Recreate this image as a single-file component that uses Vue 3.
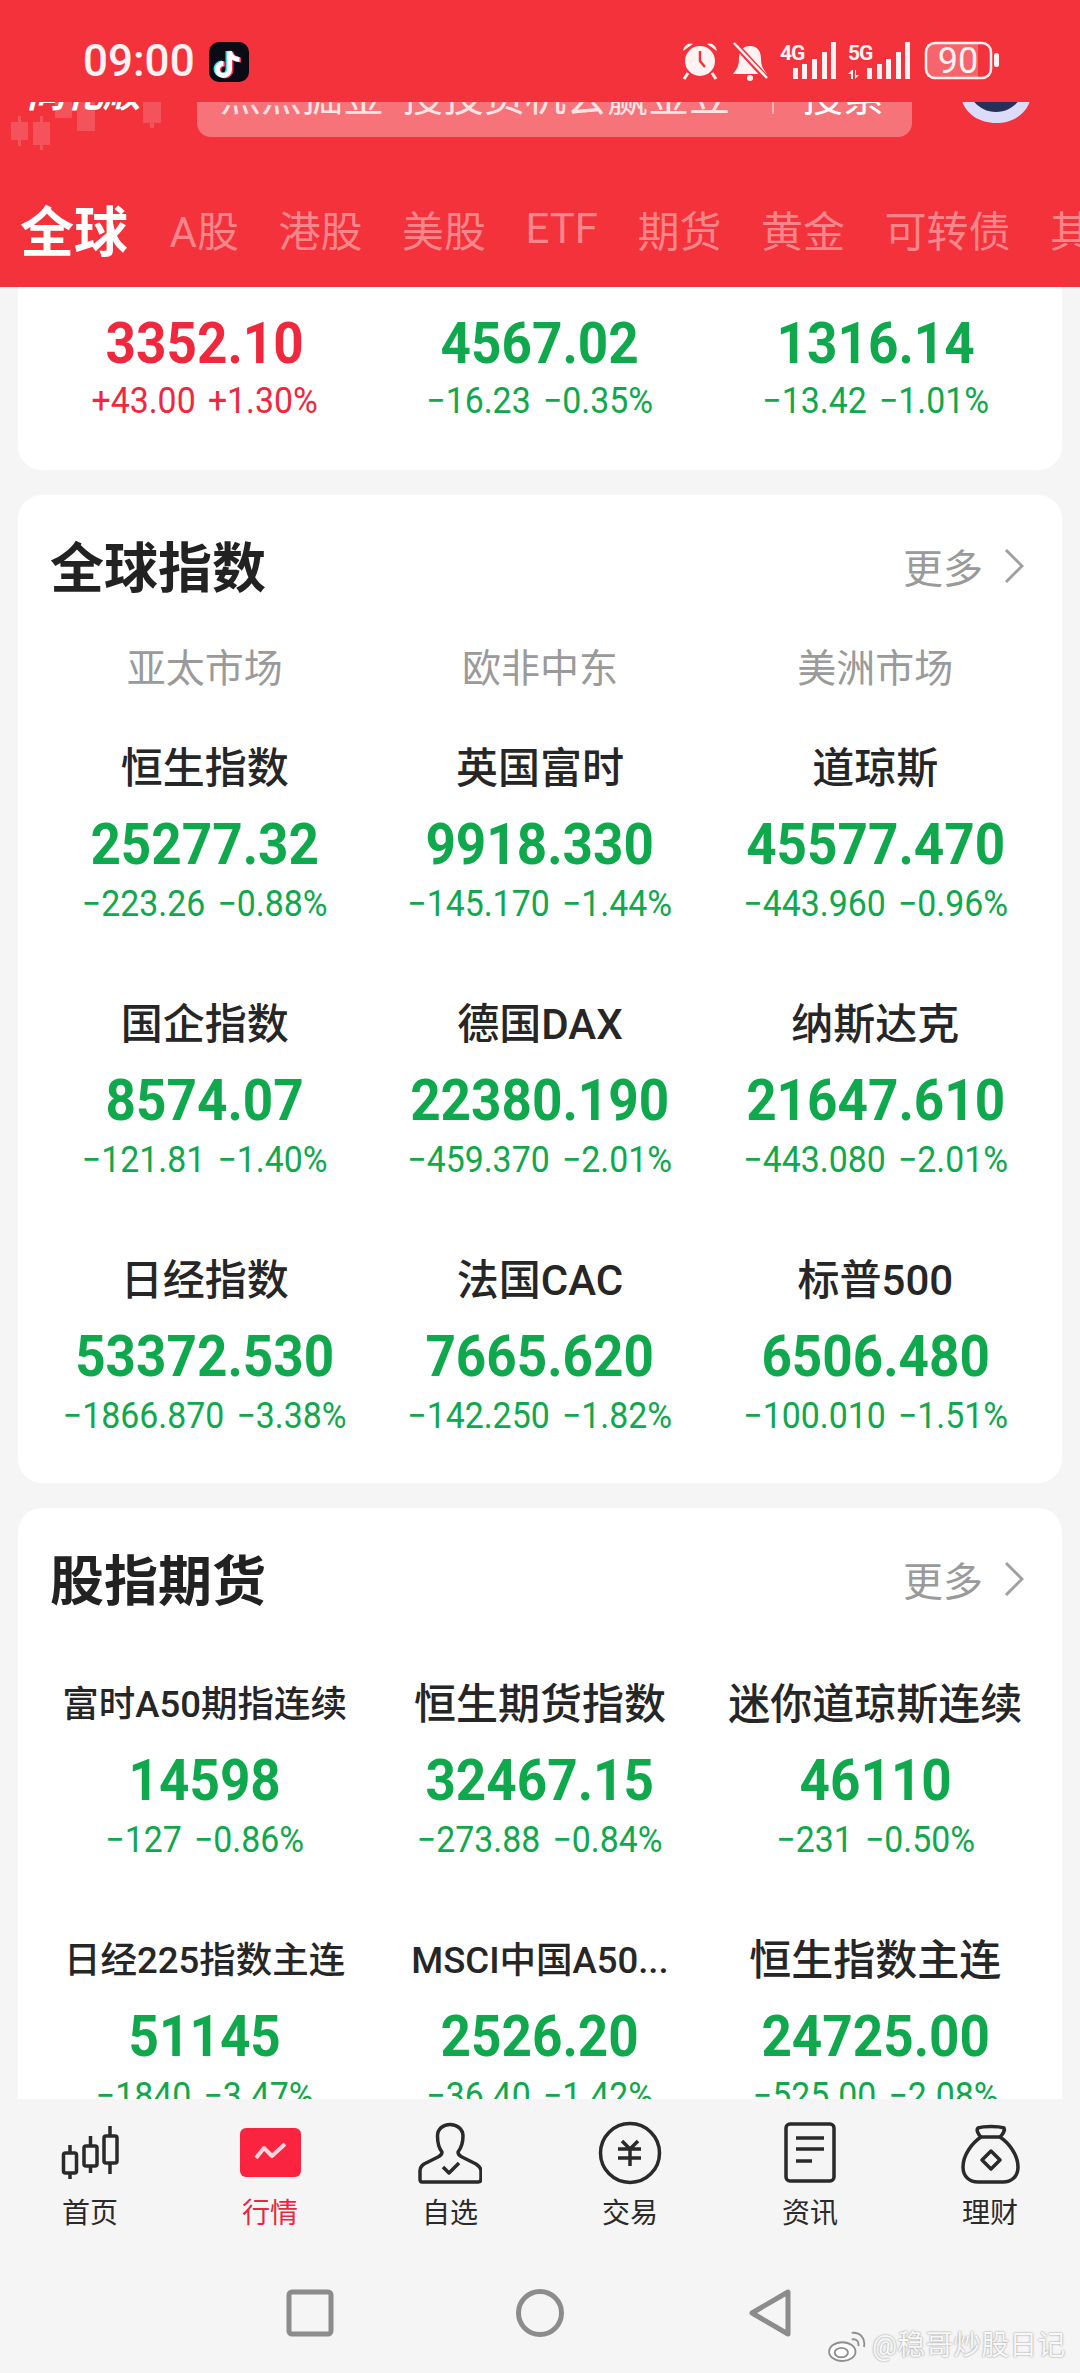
<script setup>
const tabs = ["A股", "港股", "美股", "ETF", "期货", "黄金", "可转债", "其他"];

const topQuotes = [
  { value: "3352.10", diff: "+43.00", pct: "+1.30%", up: true },
  { value: "4567.02", diff: "−16.23", pct: "−0.35%" },
  { value: "1316.14", diff: "−13.42", pct: "−1.01%" },
];

const globalQuotes = [
  { name: "恒生指数", value: "25277.32", diff: "−223.26", pct: "−0.88%" },
  { name: "英国富时", value: "9918.330", diff: "−145.170", pct: "−1.44%" },
  { name: "道琼斯", value: "45577.470", diff: "−443.960", pct: "−0.96%" },
  { name: "国企指数", value: "8574.07", diff: "−121.81", pct: "−1.40%" },
  { name: "德国DAX", value: "22380.190", diff: "−459.370", pct: "−2.01%" },
  { name: "纳斯达克", value: "21647.610", diff: "−443.080", pct: "−2.01%" },
  { name: "日经指数", value: "53372.530", diff: "−1866.870", pct: "−3.38%" },
  { name: "法国CAC", value: "7665.620", diff: "−142.250", pct: "−1.82%" },
  { name: "标普500", value: "6506.480", diff: "−100.010", pct: "−1.51%" },
];

const futures = [
  { name: "富时A50期指连续", value: "14598", diff: "−127", pct: "−0.86%", small: true },
  { name: "恒生期货指数", value: "32467.15", diff: "−273.88", pct: "−0.84%" },
  { name: "迷你道琼斯连续", value: "46110", diff: "−231", pct: "−0.50%" },
  { name: "日经225指数主连", value: "51145", diff: "−1840", pct: "−3.47%", small: true },
  { name: "MSCI中国A50...", value: "2526.20", diff: "−36.40", pct: "−1.42%", small: true },
  { name: "恒生指数主连", value: "24725.00", diff: "−525.00", pct: "−2.08%" },
];
</script>

<template>
  <div class="page">
    <header class="header">
      <div class="status-bar">
        <span class="time">09:00</span>
        <svg class="tiktok" viewBox="0 0 40 40">
          <rect width="40" height="40" rx="10" fill="#0b0b16" />
          <g fill="none" stroke-width="5">
            <path d="M19 9V27A6 6 0 1 1 13 21M19 9C20 14 24 17 29 17" stroke="#35e0e6" />
            <path d="M22 10V28A6 6 0 1 1 16 22M22 10C23 15 27 18 32 18" stroke="#f5305a" />
            <path d="M20.5 9.5V27.5A6 6 0 1 1 14.5 21.5M20.5 9.5C21.5 14.5 25.5 17.5 30.5 17.5" stroke="#fff" />
          </g>
        </svg>
        <svg class="status-icons" viewBox="0 0 320 44">
          <!-- alarm -->
          <circle cx="20" cy="21" r="15" fill="#fff2f2" />
          <path d="M20 11V21L25 27" fill="none" stroke="#f3323b" stroke-width="2.5" />
          <path d="M3 11C4 5 9 2 13 4ZM37 11C36 5 31 2 27 4Z" fill="#fff2f2" />
          <path d="M8 33L4 39M32 33L36 39" stroke="#fff2f2" stroke-width="3" />
          <!-- muted bell -->
          <path d="M70 6C62 6 59 12 59 19C59 27 56 30 53 34H87C84 30 81 27 81 19C81 12 78 6 70 6Z" fill="#fff2f2" />
          <circle cx="70" cy="38" r="3" fill="#fff2f2" />
          <path d="M54 3L87 39" stroke="#f3323b" stroke-width="6" />
          <path d="M54 3L87 38" stroke="#fff2f2" stroke-width="2.5" />
          <!-- 4G -->
          <text x="100" y="20" class="net">4G</text>
          <path d="M113 28h5v11h-5zM122 24h5v15h-5zM132 19h5v20h-5zM142 12h5v27h-5zM151 2h5v37h-5z" fill="#fff2f2" />
          <!-- 5G -->
          <text x="168" y="20" class="net">5G</text>
          <path d="M172 30l-4 4h3v5h2v-9zM175 30v9l4-4h-3v-5z" fill="#fff2f2" />
          <path d="M187 28h5v11h-5zM197 24h5v15h-5zM206 19h5v20h-5zM216 12h5v27h-5zM225 2h5v37h-5z" fill="#fff2f2" />
          <!-- battery -->
          <rect x="247" y="4" width="51" height="33" fill="#fff" opacity=".25" />
          <rect x="246" y="3" width="65" height="35" rx="9" fill="none" stroke="#fff2f2" stroke-width="2.5" />
          <rect x="314" y="13" width="5" height="14" rx="2.5" fill="#fff2f2" />
          <text x="278" y="33" class="batt">90</text>
        </svg>
      </div>

      <div class="search-row">
        <svg class="deco" viewBox="0 0 170 60">
          <g fill="#fff" opacity=".16">
            <path d="M11 20h17v18H11zM18 14h3v30h-3z" />
            <path d="M33 20h17v23H33zM40 14h3v34h-3z" />
            <path d="M55 0h17v16H55zM77 0h18v29H77z" />
            <path d="M143 0h18v21h-18zM150 0h4v26h-4z" />
          </g>
        </svg>
        <div class="logo">同花顺</div>
        <div class="search">
          <span class="hint">点点掘金<i class="gap"></i>搜投资机会赢金豆</span>
          <span class="divider"></span>
          <span class="search-btn">搜索</span>
        </div>
        <svg class="robot" viewBox="0 0 72 40">
          <path d="M1 8C1 25 16 38 36 38C56 38 71 25 71 8V0H1Z" fill="#dcdcfa" />
          <path d="M8 0C8 14 20 27 36 27C52 27 64 14 64 0Z" fill="#25315a" />
          <circle cx="25" cy="5" r="2" fill="#fff" />
          <circle cx="47" cy="5" r="2" fill="#fff" />
        </svg>
      </div>

      <nav class="tabs">
        <span class="tab active">全球</span>
        <span v-for="t in tabs" :key="t" class="tab">{{ t }}</span>
      </nav>
    </header>

    <main class="content">
      <section class="card first">
        <div class="grid">
          <div v-for="q in topQuotes" :key="q.value" class="quote" :class="{ up: q.up }">
            <div class="value">{{ q.value }}</div>
            <div class="change"><span>{{ q.diff }}</span><span>{{ q.pct }}</span></div>
          </div>
        </div>
      </section>

      <section class="card">
        <div class="card-head">
          <h2>全球指数</h2>
          <div class="more">
            更多
            <svg viewBox="0 0 20 36" class="chevron"><path d="M2 2L18 18L2 34" /></svg>
          </div>
        </div>
        <div class="grid markets">
          <span>亚太市场</span>
          <span>欧非中东</span>
          <span>美洲市场</span>
        </div>
        <div class="grid rows">
          <div v-for="q in globalQuotes" :key="q.name" class="quote">
            <div class="name">{{ q.name }}</div>
            <div class="value">{{ q.value }}</div>
            <div class="change"><span>{{ q.diff }}</span><span>{{ q.pct }}</span></div>
          </div>
        </div>
      </section>

      <section class="card">
        <div class="card-head">
          <h2>股指期货</h2>
          <div class="more">
            更多
            <svg viewBox="0 0 20 36" class="chevron"><path d="M2 2L18 18L2 34" /></svg>
          </div>
        </div>
        <div class="grid rows futures">
          <div v-for="q in futures" :key="q.name" class="quote">
            <div class="name" :class="{ small: q.small }">{{ q.name }}</div>
            <div class="value">{{ q.value }}</div>
            <div class="change"><span>{{ q.diff }}</span><span>{{ q.pct }}</span></div>
          </div>
        </div>
      </section>
    </main>

    <footer class="bottom">
      <div class="nav">
        <div class="nav-item">
          <svg viewBox="0 0 64 64" class="ico">
            <path d="M12 24V58M32.5 15V52M52 5V53" />
            <rect x="5.5" y="32" width="13" height="20" rx="2" fill="#f5f5f5" />
            <rect x="26" y="25" width="13" height="20" rx="2" fill="#f5f5f5" />
            <rect x="46" y="15" width="13" height="27" rx="2" fill="#f5f5f5" />
          </svg>
          <span>首页</span>
        </div>
        <div class="nav-item on">
          <svg viewBox="0 0 64 64" class="ico">
            <rect x="2" y="7" width="61" height="49" rx="6" fill="#fb2440" stroke="none" />
            <path d="M18 37L26 27L34 35L47 23" stroke="#ffd3da" stroke-width="4" />
          </svg>
          <span>行情</span>
        </div>
        <div class="nav-item">
          <svg viewBox="0 0 64 64" class="ico">
            <path d="M24 31C20 26 19.5 20 19.5 15C19.5 8 25 3.5 32 3.5C39 3.5 45 8 45 15C45 20 44 26 40 31C40 34 42 35 44 36L58 43C61 45 63 47 63 50V58C63 60 62 61 60 61H4C2.500 61 2 60 2 58V50C2 47 3 45 6 43L20 36C22 35 24 34 24 31Z" />
            <path d="M25 46L31 52L41 42" />
          </svg>
          <span>自选</span>
        </div>
        <div class="nav-item">
          <svg viewBox="0 0 64 64" class="ico">
            <circle cx="32" cy="32" r="29.500" />
            <path d="M24 20L32 28L40 20M20 28H43M20 37H43M32 28V45" />
          </svg>
          <span>交易</span>
        </div>
        <div class="nav-item">
          <svg viewBox="0 0 64 64" class="ico">
            <rect x="8" y="3" width="48" height="57" rx="4" />
            <path d="M18 17H46M18 28H46M18 40H34" />
          </svg>
          <span>资讯</span>
        </div>
        <div class="nav-item">
          <svg viewBox="0 0 64 64" class="ico">
            <path d="M20 7C26 5 40 5 46 7C47 9 45 13 42 16H23C20 13 18 9 20 7Z" />
            <path d="M23 16C14 22 5 34 5 46C5 56 12 61 20 61H45C53 61 60 56 60 46C60 34 51 22 42 16" />
            <path d="M33 30L42 39L33 48L24 39Z" />
          </svg>
          <span>理财</span>
        </div>
      </div>

      <div class="sys-nav">
        <svg viewBox="0 0 50 50" class="sys"><rect x="4" y="4" width="42" height="42" rx="3" /></svg>
        <svg viewBox="0 0 50 50" class="sys"><circle cx="25" cy="25" r="21.500" /></svg>
        <svg viewBox="0 0 50 50" class="sys"><path d="M7 25L43 4V46Z" /></svg>
      </div>

      <div class="watermark">
        <svg viewBox="0 0 40 34" class="weibo">
          <ellipse cx="15" cy="23" rx="14" ry="10" fill="#fff" stroke="#8f8f8f" stroke-width="2" />
          <ellipse cx="14" cy="24" rx="7" ry="5" fill="none" stroke="#8f8f8f" stroke-width="2" />
          <path d="M25 10C30 9 33 12 32 17M25 3C34 2 40 9 38 18" fill="none" stroke="#8f8f8f" stroke-width="2" />
        </svg>
        <span>@稳哥炒股日记</span>
      </div>
    </footer>
  </div>
</template>

<style scoped>
.page {
  position: relative;
  width: 1080px;
  height: 2373px;
  display: flex;
  flex-direction: column;
  overflow: hidden;
  background: #f5f5f5;
  font-family: Roboto, "Noto Sans CJK SC", sans-serif;
}

/* header */
.header {
  height: 287px;
  flex: none;
  background: #f3323b;
  color: #fff;
}
.status-bar {
  height: 102px;
  box-sizing: border-box;
  display: flex;
  align-items: center;
  padding: 20px 0 0 83px;
}
.time {
  font-size: 44px;
  font-weight: 500;
  color: #fff2f2;
}
.tiktok {
  width: 40px;
  height: 40px;
  margin: 1px 0 0 14px;
}
.status-icons {
  width: 320px;
  height: 44px;
  margin-left: auto;
  margin-right: 80px;
  margin-top: 2px;
}
.net {
  font-size: 21px;
  font-weight: 700;
  fill: #fff2f2;
  letter-spacing: -1px;
}
.batt {
  font-size: 36px;
  text-anchor: middle;
  fill: #fff2f2;
}
.search-row {
  position: relative;
  height: 50px;
  display: flex;
  align-items: flex-end;
  overflow: hidden;
}
.deco {
  position: absolute;
  left: 0;
  top: 0;
  width: 170px;
  height: 60px;
}
.logo {
  position: relative;
  width: 197px;
  padding: 0 0 38px 27px;
  box-sizing: border-box;
  font-size: 38px;
  line-height: 40px;
  font-weight: 700;
  font-style: italic;
  white-space: nowrap;
}
.search {
  width: 715px;
  height: 80px;
  flex: none;
  box-sizing: border-box;
  padding: 20px 0 0 23px;
  margin-bottom: 15px;
  display: flex;
  align-items: flex-start;
  background: rgba(255, 255, 255, 0.32);
  border-radius: 14px;
  font-size: 41px;
  line-height: 40px;
  color: #fde4e4;
}
.gap {
  display: inline-block;
  width: 18px;
}
.hint {
  width: 552px;
  white-space: nowrap;
}
.divider {
  width: 2px;
  height: 30px;
  margin-top: 7px;
  background: rgba(255, 255, 255, 0.45);
}
.search-btn {
  margin-left: 28px;
  color: #fff;
}
.robot {
  width: 72px;
  height: 40px;
  flex: none;
  margin: 0 0 27px 48px;
  align-self: flex-end;
}
.tabs {
  height: 135px;
  box-sizing: border-box;
  padding: 18px 0 0 20px;
  display: flex;
  align-items: center;
  gap: 39.5px;
  overflow: hidden;
  font-size: 42px;
  white-space: nowrap;
  color: rgba(255, 255, 255, 0.42);
}
.tab {
  flex: none;
}
.tab.active {
  margin-right: 2px;
  font-size: 54px;
  font-weight: 700;
  color: #fff;
}

/* cards */
.content {
  flex: 1;
  min-height: 0;
  overflow: hidden;
  padding: 0 18px;
  display: flex;
  flex-direction: column;
  gap: 25px;
}
.card {
  flex: none;
  background: #fff;
  border-radius: 24px;
  padding: 36px 19px 47px;
}
.card.first {
  padding: 26px 19px 49px;
  border-radius: 0 0 24px 24px;
}
.grid {
  display: grid;
  grid-template-columns: repeat(3, 1fr);
}
.card-head {
  height: 72px;
  display: flex;
  align-items: center;
  justify-content: space-between;
  padding: 0 19px 0 13px;
}
h2 {
  margin: -6px 0 0;
  font-size: 54px;
  font-weight: 700;
  color: #222;
}
.more {
  display: flex;
  align-items: center;
  gap: 21px;
  margin-top: -3px;
  font-size: 40px;
  color: #9a9a9a;
}
.chevron {
  width: 20px;
  height: 36px;
  fill: none;
  stroke: #a0a0a0;
  stroke-width: 3;
}
.markets {
  margin-top: 41px;
  text-align: center;
  font-size: 39px;
  line-height: 50px;
  color: #9a9a9a;
}
.rows {
  margin-top: 50px;
  row-gap: 76px;
}
.rows.futures {
  margin-top: 64px;
}
.quote {
  text-align: center;
  color: #0fa84c;
}
.quote.up {
  color: #f0283e;
}
.name {
  font-size: 42px;
  font-weight: 500;
  line-height: 50px;
  margin-bottom: 20px;
  color: #262626;
  white-space: nowrap;
}
.name.small {
  font-size: 36.5px;
}
/* the screenshot is slightly stretched: tall, narrow digits */
.value {
  font-size: 58px;
  font-weight: 700;
  line-height: 60px;
  transform: scaleX(0.915);
}
.change {
  margin-top: 10px;
  display: flex;
  justify-content: center;
  gap: 13px;
  font-size: 36px;
  line-height: 40px;
  white-space: nowrap;
  transform: scaleX(0.94);
}
.card.first .change {
  margin-top: 8px;
}

/* bottom nav */
.bottom {
  height: 274px;
  flex: none;
  background: #f5f5f5;
}
.nav {
  display: grid;
  grid-template-columns: repeat(6, 180px);
  padding-top: 22px;
}
.nav-item {
  display: flex;
  flex-direction: column;
  align-items: center;
  gap: 11px;
  font-size: 28px;
  line-height: 36px;
  color: #2a2a2a;
}
.nav-item.on {
  color: #e8283f;
}
.ico {
  width: 64px;
  height: 64px;
  fill: none;
  stroke: #2a2a2a;
  stroke-width: 3.5;
  stroke-linejoin: round;
}
.sys-nav {
  margin-top: 56px;
  display: flex;
  justify-content: center;
  gap: 180px;
}
.sys {
  width: 50px;
  height: 50px;
  fill: none;
  stroke: #8c8c8c;
  stroke-width: 5;
  stroke-linejoin: round;
}
.watermark {
  position: absolute;
  left: 828px;
  top: 2328px;
  display: flex;
  align-items: center;
  gap: 6px;
  font-size: 28px;
  line-height: 36px;
  color: #f8f8f8;
  text-shadow: 0 0 2px #808080;
}
.weibo {
  width: 38px;
  height: 32px;
}
</style>
